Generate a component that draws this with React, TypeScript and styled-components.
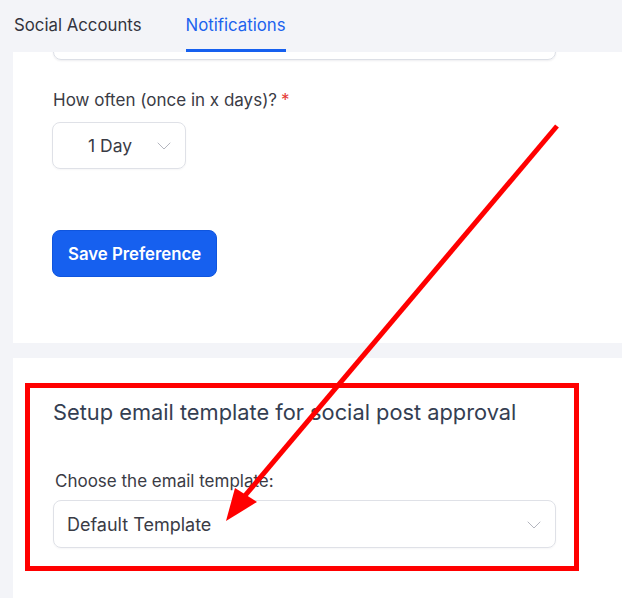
import React from "react";
import styled, { createGlobalStyle } from "styled-components";
import { ChevronDown } from "lucide-react";

const GlobalStyle = createGlobalStyle`
  * { box-sizing: border-box; }
  html, body { margin: 0; padding: 0; }
  body {
    background: #f3f4f8;
    font-family: Inter, "Noto Sans", sans-serif;
    color: #33343d;
    overflow: hidden;
  }
`;

const Page = styled.div`
  position: relative;
  width: 622px;
  height: 598px;
  overflow: hidden;
  background: #f3f4f8;
`;

const TabBar = styled.nav`
  height: 52px;
  display: flex;
  align-items: stretch;
  gap: 44px;
  padding-left: 14px;
  position: relative;
  z-index: 1;
  background: #f3f4f8;
`;

const Tab = styled.div<{ $active?: boolean }>`
  display: flex;
  align-items: center;
  padding-top: 1px;
  font-size: 16.8px;
  color: ${(p) => (p.$active ? "#1c63ee" : "#33343d")};
  border-bottom: 3px solid ${(p) => (p.$active ? "#1660ef" : "transparent")};
`;

const Card = styled.section<{ $pad: string; $height: number }>`
  margin-left: 13px;
  background: #fff;
  padding: ${(p) => p.$pad};
  height: ${(p) => p.$height}px;
  overflow: hidden;
  display: flex;
  flex-direction: column;
  align-items: flex-start;
`;

const Gap = styled.div`
  height: 15px;
`;

const CutInput = styled.div`
  width: 503px;
  height: 48px;
  margin-top: -40px;
  margin-left: 1px;
  border: 1px solid #dcdfe6;
  border-radius: 8px;
  box-shadow: 0 1px 2px rgba(20, 30, 60, 0.08);
`;

const Label = styled.label<{ $top: number; $left?: number }>`
  margin-top: ${(p) => p.$top}px;
  margin-left: ${(p) => p.$left ?? 1}px;
  font-size: 17px;
  line-height: 22px;
  color: #3a3b45;
`;

const Required = styled.span`
  color: #e53935;
  margin-left: 4px;
`;

const Select = styled.div<{ $width: number; $top: number; $left?: number; $center?: boolean }>`
  margin-top: ${(p) => p.$top}px;
  margin-left: ${(p) => p.$left ?? 0}px;
  width: ${(p) => p.$width}px;
  height: ${(p) => (p.$center ? 47 : 48)}px;
  border: 1px solid #dfe1e7;
  border-radius: 8px;
  display: flex;
  align-items: center;
  justify-content: space-between;
  padding: ${(p) => (p.$center ? "0 9px 0 35px" : "0 9px 0 13px")};
  font-size: ${(p) => (p.$center ? 17.5 : 18)}px;
  color: #3a3b45;
  box-shadow: 0 1px 2px rgba(20, 30, 60, 0.04);

  svg {
    color: #b4b6bf;
    margin-top: 1px;
  }
`;

const Button = styled.button`
  margin-top: 61px;
  height: 47px;
  padding: 0 15px;
  border: 1px solid #0f55de;
  border-radius: 8px;
  background: #1660ef;
  color: #fff;
  font-family: Inter, "Noto Sans", sans-serif;
  font-size: 16.8px;
  font-weight: 600;
`;

const Heading = styled.h3`
  margin: 0 0 0 1px;
  font-size: 21.8px;
  font-weight: 400;
  line-height: 26px;
  color: #343e52;
`;

const Overlay = styled.svg`
  position: absolute;
  top: 0;
  left: 0;
  pointer-events: none;
  z-index: 2;
`;

export default function App() {
  return (
    <>
      <GlobalStyle />
      <Page>
        <TabBar>
          <Tab>Social Accounts</Tab>
          <Tab $active>Notifications</Tab>
        </TabBar>

        <Card $pad="0 39px" $height={291}>
          <CutInput />
          <Label $top={29}>
            How often (once in x days)?<Required>*</Required>
          </Label>
          <Select $width={134} $top={11} $center>
            <span>1 Day</span>
            <ChevronDown size={24} strokeWidth={1} />
          </Select>
          <Button>Save Preference</Button>
        </Card>

        <Gap />

        <Card $pad="41px 39px 0" $height={240}>
          <Heading>Setup email template for social post approval</Heading>
          <Label $top={45} $left={3}>
            Choose the email template:
          </Label>
          <Select $width={503} $top={8} $left={1}>
            <span>Default Template</span>
            <ChevronDown size={24} strokeWidth={1} />
          </Select>
        </Card>

        <Overlay width="622" height="598" viewBox="0 0 622 598">
          <rect
            x="27.5"
            y="385.5"
            width="549"
            height="183"
            fill="none"
            stroke="#ff0000"
            strokeWidth="5"
          />
          <line
            x1="557"
            y1="126"
            x2="243"
            y2="498"
            stroke="#ff0000"
            strokeWidth="5"
          />
          <polygon points="226,521 235,488 257,502" fill="#ff0000" />
        </Overlay>
      </Page>
    </>
  );
}
